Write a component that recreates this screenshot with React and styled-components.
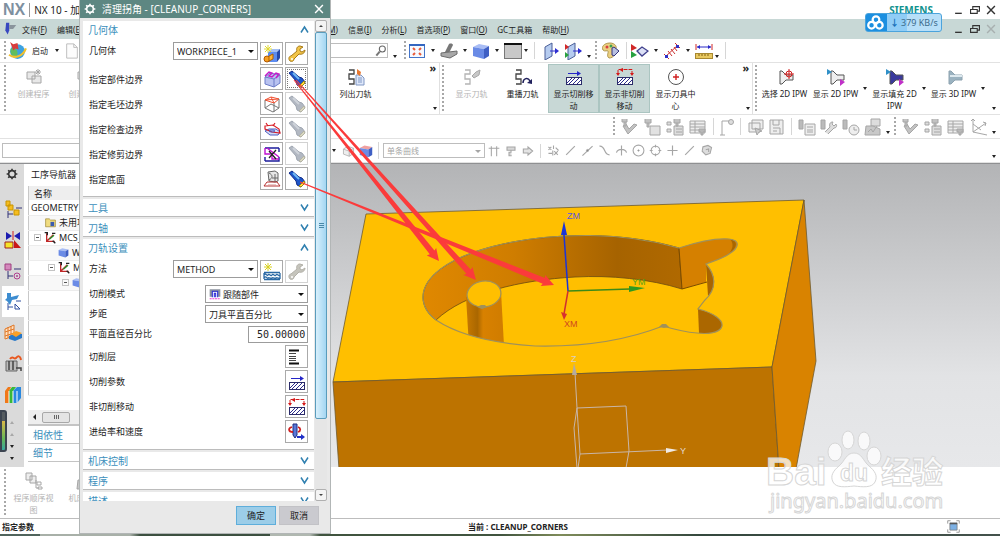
import React from 'react'
import styled, { createGlobalStyle, css } from 'styled-components'

const GlobalStyle = createGlobalStyle`
  * {
    box-sizing: border-box;
  }
  body {
    margin: 0;
    background: #ffffff;
  }
  body, button, input, select {
    font-family: 'Noto Sans', 'Noto Sans CJK SC', sans-serif;
    font-size: 9px;
    color: #222222;
  }
`

/* ---------- icons ---------- */

const Svg = styled.svg`
  display: block;
  flex: none;
  fill: none;
  stroke-width: 1;
`

const Icon = ({ size = 18, children }) => (
  <Svg width={size} height={size} viewBox="0 0 18 18" aria-hidden="true">
    {children}
  </Svg>
)

const Gear = ({ size, color }) => (
  <Icon size={size}>
    <circle cx="9" cy="9" r="5" stroke={color} strokeWidth="2.4" />
    <path
      d="M9 1v3M9 14v3M1 9h3M14 9h3M3.3 3.3l2.2 2.2M12.5 12.5l2.2 2.2M3.3 14.7l2.2-2.2M12.5 5.5l2.2-2.2"
      stroke={color}
      strokeWidth="2.4"
    />
  </Icon>
)

const Cube = ({ size, light = '#a9bdf5', mid = '#6a8be6', dark = '#3f5fc4' }) => (
  <Icon size={size}>
    <path d="M1 5l6-3 10 2-5 3z" fill={light} />
    <path d="M1 5l11 2v10L1 14z" fill={mid} />
    <path d="M12 7l5-3v10l-5 3z" fill={dark} />
  </Icon>
)

const NewBlock = () => (
  <Icon>
    <path d="M5 7l4-3h8l-3 3z" fill="#a4c0f4" />
    <path d="M5 7h9v10H5z" fill="#5c8cf0" />
    <path d="M14 7l3-3v9l-3 4z" fill="#2448a8" />
    <circle cx="4" cy="14" r="3" fill="#f8a020" stroke="#b05800" />
    <path d="M6 11l4-2v5l-4 2z" fill="#ffb838" stroke="#b06000" />
    <path d="M5 0v8M1 4h8M2 1l6 6M8 1L2 7" stroke="#e0d830" />
  </Icon>
)

const Wrench = ({ muted }) => (
  <Icon>
    <path
      d="M12 1c-3 0-4 3-3 5L3 11c-2 0-3 3-1 5 2 1 4 0 4-2l5-5c3 1 6-1 6-4l-3 2-2-1 0-2 3-2z"
      fill={muted ? '#c5c4bc' : '#f2c548'}
      stroke={muted ? '#b2b0a8' : '#a87a18'}
    />
    <circle cx="4" cy="14" r="1" fill="#ffffff" />
  </Icon>
)

const Torch = ({ muted }) => (
  <Icon>
    <path
      d="M1 3l3-2 7 6 3 1 3 4-4 5-4-2-1-4z"
      fill={muted ? '#b2b8c2' : '#1c55c8'}
      stroke={muted ? '#9fa6b1' : '#122c88'}
    />
    <path d="M5 3l6 6" stroke={muted ? '#ced3da' : '#6fb8f5'} strokeWidth="2" />
    <path d="M16 11l1 2-4 4-2-1z" fill={muted ? '#d8d7c0' : '#ffe040'} stroke={muted ? '#b4b3a4' : '#a08410'} />
  </Icon>
)

const PartBoundary = () => (
  <Icon>
    <path d="M2 7l5-4 10 2v8l-6 4-9-3z" fill="#b8c2f0" stroke="#6c7cc8" />
    <path d="M11 9v8M2 7l9 2 6-4" stroke="#6c7cc8" />
    <path d="M2 6l4-4 3 1-3 3 3 1 4-4 3 1-3 4" stroke="#c818c8" strokeWidth="1.4" />
  </Icon>
)

const BlankBoundary = () => (
  <Icon>
    <path d="M2 5l6-3 8 2-5 4zM2 5l14-1M8 2l3 6" stroke="#f05030" />
    <path d="M2 5v8l8 4 6-4V4M11 8v9M2 13l6-4 8 4" stroke="#777777" />
  </Icon>
)

const CheckBoundary = () => (
  <Icon>
    <path d="M2 11l5 4h8l2-3-4-3H6z" fill="#d4dcf6" stroke="#4c5cc0" />
    <path d="M2 6l8-1 6 4 1 4-8-1-7-3zM3 3l2 3M12 3l-2 3" stroke="#d81c24" strokeWidth="1.2" />
    <ellipse cx="9" cy="11" rx="3" ry="1" stroke="#4c5cc0" />
  </Icon>
)

const TrimBoundary = () => (
  <Icon>
    <path d="M2 3h14M16 3v4M2 16h14v-4M2 12v4" stroke="#1c1c9c" strokeWidth="1.4" />
    <path d="M2 3v6h7v5h7M4 3l12 9" stroke="#c010d0" strokeWidth="1.4" />
    <path d="M6 6l7 8M13 5l-7 8" stroke="#222222" strokeWidth="1.3" />
  </Icon>
)

const FloorFace = () => (
  <Icon>
    <path d="M5 2l7-1 3 2v8l-3 1-6-1z" fill="#e6e6e6" stroke="#666666" />
    <path d="M6 3c4 2 4 5 0 7M12 4v8M9 8h6" stroke="#666666" />
    <path d="M1 16l3-4h10l3 4z" fill="none" stroke="#b83030" />
    <path d="M5 15h8" stroke="#d89090" />
  </Icon>
)

const NewMethod = () => (
  <Icon>
    <path
      d="M1 9.5h16M1 16.5h16M1 10v6M17 10v6M1 12c2-3 3 2 4 0s3 2 4 0 3 2 4 0 3 2 4 0M1 15c2-3 3 1 4 0s3 1 4 0 3 1 4 0 3 1 4 0"
      stroke="#2b69a4"
      strokeWidth="1.3"
    />
    <path d="M5 0v8M1 4h8M2 1l6 6M8 1L2 7" stroke="#d8d020" />
  </Icon>
)

const FollowPart = () => (
  <Icon size={12}>
    <path d="M1 2h16v11h-4V6H5v7H1z" fill="#8c929e" />
    <path d="M5 14V5h8v9M8 14V8h2v6" stroke="#3030d8" strokeWidth="1.6" />
    <path d="M1 16h16" stroke="#f040d0" strokeWidth="1.6" strokeDasharray="3 1" />
  </Icon>
)

const CutLevels = () => (
  <Icon>
    <path d="M1 2.5h10M1 15.5h10" stroke="#111111" strokeWidth="1.8" />
    <path d="M1 5.5h7M1 8.5h7M1 10.5h7M1 12.5h7" stroke="#444444" />
  </Icon>
)

const Hatch = () => (
  <>
    <rect x="1.5" y="9.5" width="15" height="7" fill="#ffffff" stroke="#2c2c6a" />
    <path d="M2 15l5-5M4 16l6-6M8 16l6-6M12 16l4-4" stroke="#2c2c8a" />
  </>
)

const CutParams = () => (
  <Icon>
    <Hatch />
    <path d="M3 5.5h10" stroke="#2626c8" />
    <path d="M12 3l4 2.5-4 2.5z" fill="#2626c8" />
  </Icon>
)

const NonCutMoves = () => (
  <Icon>
    <Hatch />
    <path d="M2 6V1.5h14V6" stroke="#d41818" strokeDasharray="4 1" />
    <path d="M0 5h4l-2 3zM14 5h4l-2 3zM7 0v4L3 1.5z" fill="#d41818" />
  </Icon>
)

const Feeds = () => (
  <Icon>
    <path d="M5 1h4v11l-2 3-2-3z" fill="#5a78d8" stroke="#1c2c80" />
    <path d="M4 4c-4 1-4 5 1 5M10 4c3 1 3 4 0 5" stroke="#d02020" strokeWidth="1.8" />
    <path d="M9 14h5" stroke="#2030c8" strokeWidth="2" />
    <path d="M13 11l4 3-4 3z" fill="#2030c8" />
  </Icon>
)

const Launch = () => (
  <Icon size={19}>
    <circle cx="9" cy="10" r="7" fill="#3da2e0" />
    <path d="M3 7c4-2 8 3 5 8-4 0-7-4-5-8z" fill="#5fbe60" />
    <path d="M1 13c5 4 13 2 16-6" stroke="#f3c02c" strokeWidth="2" />
    <path d="M2 1l3 2 4-1 1 6-3-1-2 2z" fill="#d83c3c" />
  </Icon>
)

const BlankPage = () => (
  <Icon size={16}>
    <path d="M3 1h8l4 4v12H3z" fill="#fcfcfc" stroke="#b8b8b8" />
    <path d="M11 1v4h4" stroke="#b8b8b8" />
  </Icon>
)

const FitView = () => (
  <Icon>
    <rect x="1.5" y="2.5" width="15" height="13" fill="#f6f9ff" stroke="#4474c8" />
    <path d="M1 3h16" stroke="#3366c0" strokeWidth="2" />
    <path d="M5 6l2 2M13 6l-2 2M5 13l2-2M13 13l-2-2" stroke="#e85a38" strokeWidth="2" />
  </Icon>
)

const SectionView = () => (
  <Icon>
    <path d="M5 10L9 2c2-1 4 0 4 1l-4 8z" fill="#777777" />
    <path d="M1 11l8-1 8-1v3l-7 4-9-2z" fill="#a8a8a8" stroke="#6c6c6c" />
  </Icon>
)

const Backdrop = () => (
  <Icon>
    <rect x="0.5" y="1.5" width="17" height="15" fill="#c8c8c8" stroke="#777777" />
    <path d="M0 2h18" stroke="#111111" strokeWidth="2" />
  </Icon>
)

const PlaneOut = ({ flag }) => (
  <Icon>
    <path d="M3 5l7-4v13l-7 4z" fill="#b6ccf0" stroke="#4a5f98" />
    <path d="M8 9h6" stroke="#2c2cd0" />
    <path d="M13 6l4 3-4 3z" fill="#2c2cd0" />
    {flag && (
      <>
        <path d="M0 2l4 3-4 3z" fill="#d02828" />
        <path d="M0 10l4 3-4 3z" fill="#28a040" />
      </>
    )}
  </Icon>
)

const Palette = () => (
  <Icon>
    <path d="M8 1c-6 0-9 4-7 7 2 2 4 0 5 1s-2 5 1 7c5 0 6-4 6-8 3-3 0-7-5-7z" fill="#ecd080" stroke="#b09850" />
    <circle cx="5" cy="5" r="1.5" fill="#d84040" />
    <circle cx="9" cy="4" r="1.5" fill="#40a050" />
    <path d="M10 6l2-1 5 4-5 5-2-1z" fill="#b8c0e0" stroke="#34347c" />
  </Icon>
)

const PlayShape = () => (
  <Icon>
    <path d="M0 2l6 4-6 3z" fill="#d02828" />
    <path d="M0 9l6 4-6 3z" fill="#28a040" />
    <path d="M6 9l5-4 6 4-6 5z" fill="#dce0f6" stroke="#40408c" strokeWidth="1.3" />
  </Icon>
)

const Measure = () => (
  <Icon>
    <path d="M2 15L15 3M1 12l5 5M12 1l5 5M5 9l4 5M8 7l4 5M11 5l3 4" stroke="#cc3030" />
    <path d="M2 13h3v3H2zM13 3h3v3h-3z" fill="#3030c8" />
  </Icon>
)

const Ruler = () => (
  <Icon>
    <path d="M1 2v6M17 2v6" stroke="#d02828" />
    <path d="M2 5h14" stroke="#2828c8" />
    <path d="M2 5l3-2v4zM16 5l-3-2v4z" fill="#2828c8" />
    <rect x="0.5" y="11.5" width="17" height="5" fill="#e8c860" stroke="#a88830" />
    <path d="M4 12v2M7 12v2M10 12v2M13 12v2" stroke="#806010" />
  </Icon>
)

const pathLine = 'M2 2h5v4H2v5h5v5H2'

const PathIcon = ({ kind }) => {
  const muted = kind === 'show'
  return (
    <Icon>
      <path d={pathLine} stroke={muted ? '#b4b4b4' : '#444444'} strokeWidth="1.3" />
      {kind === 'list' && (
        <>
          <path d="M9 7h5l3 3v7H9z" fill="#dfe8fa" stroke="#8098c4" />
          <path d="M11 10h4M11 12h4M11 14h4" stroke="#8098c4" />
          <path d="M10 1l4 3-1 4-3-2z" fill="#e87830" />
        </>
      )}
      {kind === 'show' && <path d="M9 8l4-4 4-2-1 5-5 3z" fill="#c8c8c8" stroke="#a8a8a8" />}
      {kind === 'replay' && (
        <>
          <path d="M9 15c0-5 5-6 7-2" stroke="#20205c" strokeWidth="1.5" />
          <path d="M13 15l5-4v5z" fill="#20205c" />
        </>
      )}
    </Icon>
  )
}

const ToolCenter = () => (
  <Icon>
    <circle cx="9" cy="9" r="7.5" stroke="#555555" />
    <path d="M9 6v6M6 9h6" stroke="#d02020" strokeWidth="1.4" />
  </Icon>
)

const Ipw = ({ kind }) => (
  <Icon>
    <path
      d="M4 3h2l4 4h7v5h-7l-4 4H4z"
      fill={kind === 'fill' ? '#3a3a9c' : kind === '3d' ? '#9ab2c0' : '#eeeeee'}
      stroke={kind === '3d' ? '#8da2af' : '#555555'}
    />
    {kind === 'pick' && (
      <>
        <circle cx="13" cy="6" r="3" stroke="#d02020" />
        <path d="M13 1v10M8 6h10" stroke="#d02020" />
      </>
    )}
    {(kind === 'show' || kind === 'fill') && (
      <>
        <path d="M0 1l5 3-5 3z" fill="#3090c8" />
        <path d="M13 11l5 3-5 4z" fill="#c030c8" />
      </>
    )}
    {kind === '3d' && <path d="M5 8h12" stroke="#dce8ee" strokeWidth="2" />}
  </Icon>
)

const mutedShapes = {
  create: (
    <>
      <path d="M2 4h8v7H2zM7 8h9v7H7z" fill="#e8e8e8" />
      <path d="M13 1v6M10 4h6M11 2l4 4M15 2l-4 4" />
    </>
  ),
  check: (
    <>
      <path d="M3 8l5 8 9-9-3-1-5 5-3-5z" fill="#c2c2c2" />
      <path d="M2 1v3h5V1M4 4v4h2V4" fill="#c2c2c2" />
    </>
  ),
  block: (
    <>
      <path d="M2 1v4h6V1M4 5v4h2V5" fill="#c2c2c2" />
      <path d="M7 8h10v9H7z" fill="#e2e2e2" />
    </>
  ),
  tree: (
    <>
      <path d="M1 4h4v3H1zM1 11h4v3H1zM8 8h9v9H8z" fill="#dddddd" />
      <path d="M8 1v4h6V1M10 5v3h2V5M10 11h6M10 14h6" fill="#c2c2c2" />
    </>
  ),
  table: (
    <>
      <path d="M1 3h15v12H1z" fill="#eeeeee" />
      <path d="M1 6h15M1 9h15M1 12h15M6 3v12" />
      <path d="M10 11h6v3h-2v3h-2v-3h-2z" fill="#b8b8b8" />
    </>
  ),
  flag: (
    <>
      <path d="M4 17V3h9M2 17h5" />
      <circle cx="13" cy="4" r="2.5" fill="#dddddd" />
    </>
  ),
  layers: (
    <>
      <path d="M5 2h11v9H5zM2 5h11v9H2z" fill="#eeeeee" />
      <path d="M8 10l2 7 2-3 3-1z" fill="#cccccc" />
    </>
  ),
  save: (
    <>
      <path d="M2 2h13v14H2z" fill="#eeeeee" />
      <path d="M5 2v5h6V2M5 10h7v6M5 13h4" />
    </>
  ),
  sheet: (
    <>
      <path d="M1 2h4v9H1z" fill="#bbbbbb" />
      <path d="M7 6h10v11H7z" fill="#eeeeee" />
      <path d="M9 9h6M9 12h6M9 14h6" />
    </>
  ),
  tool: (
    <>
      <path d="M1 2h4v9H1z" fill="#bbbbbb" />
      <path d="M8 16l6-6c3 0 3-3 2-4l-2 2-2-2 1-2c-3 0-4 2-3 5l-5 5" fill="#dddddd" />
    </>
  ),
  clock: (
    <>
      <path d="M1 2h4v9H1z" fill="#bbbbbb" />
      <circle cx="12" cy="12" r="5" fill="#eeeeee" />
      <path d="M12 9v3h3" />
    </>
  ),
  machine: (
    <>
      <path d="M7 1h9v7H7z" fill="#dddddd" />
      <path d="M2 8h7l7 3v6H1z" fill="#c8c8c8" />
      <path d="M4 14l3-3 2 3 4-6" />
    </>
  ),
  axes: <path d="M3 1v13l14 3M3 14l13-9M3 6l8 6M1 3l2-2 2 2M13 4l3 1-1 3" />,
  sequence: (
    <>
      <path d="M1 1h6v7H1zM5 4h6v7H5z" fill="#eeeeee" />
      <path d="M11 8v8h3M12 10h4v3h-4zM13 15h4v2h-4z" />
    </>
  ),
  solid: <path d="M2 7l6-4 8 3v7l-6 4-8-3zM2 7l8 3 6-4M10 10v7" fill="#eeeeee" />,
  rails: <path d="M1 5h16M5 2v15M13 2v15" strokeWidth="1.6" />,
  roller: <path d="M3 3h12v5H3zM9 8v3H6v5h4" fill="#d8d8d8" strokeWidth="1.6" />,
  next: <path d="M2 6h7V3l7 6-7 6v-3H2z" fill="#e4e4e4" strokeWidth="1.6" />,
  points: <path d="M2 4l4 4M6 4L2 8M9 2v5M12 5l4 4M2 13h5M10 10l5 5M15 10l-5 5M8 9v7" strokeWidth="1.5" />,
  line: <path d="M3 15L15 3" strokeWidth="1.6" />,
  linePoint: (
    <>
      <path d="M2 16L16 3" strokeWidth="1.6" />
      <circle cx="9" cy="9" r="1.5" fill="#888888" />
    </>
  ),
  curve: <path d="M2 3c9-1 5 12 14 12" strokeWidth="1.6" />,
  cross: <path d="M9 2v14M2 12c2-6 12-6 14 0" strokeWidth="1.6" />,
  target: (
    <>
      <circle cx="9" cy="9" r="7.5" strokeWidth="1.5" />
      <circle cx="9" cy="9" r="1" fill="#888888" />
    </>
  ),
  circle: (
    <>
      <circle cx="9" cy="9" r="6" strokeWidth="1.5" />
      <path d="M9 1v4M9 13v4M1 9h4M13 9h4" strokeWidth="1.5" />
    </>
  ),
  plus: <path d="M9 2v14M2 9h14" strokeWidth="1.6" />,
  face: <path d="M4 4l7-2 5 3-2 8-6 2-5-5zM8 8l4-1v4" fill="#dddddd" strokeWidth="1.5" />
}

const Muted = ({ name, size }) => (
  <Icon size={size}>
    <g stroke="#a6a6a6">{mutedShapes[name]}</g>
  </Icon>
)

const railShapes = {
  assembly: (
    <>
      <path d="M2 1h4v5H2zM4 5h5v5H4zM10 10h5v5h-5z" fill="#f5bd20" stroke="#c89400" />
      <path d="M4 11v7M4 14h5M12 8h6" stroke="#333377" />
    </>
  ),
  constraint: (
    <>
      <path d="M2 1l6 4-6 4zM16 1l-6 4 6 4z" fill="#1c1cb0" />
      <path d="M9 0v9" stroke="#d02020" />
      <path d="M1 11h8v6H1z" fill="#f5e428" stroke="#a02020" />
      <path d="M10 9l7 8h-7z" fill="#c81818" />
    </>
  ),
  part: (
    <>
      <path d="M1 2h6v6H1z" fill="#d488bc" stroke="#a04080" />
      <path d="M4 9v8M4 14h5M10 7h7" stroke="#333377" />
      <circle cx="13" cy="14" r="3" stroke="#b04090" />
      <circle cx="13" cy="14" r="1" fill="#b04090" />
    </>
  ),
  operation: (
    <>
      <path d="M3 0h4v4l8-2-2 4-5 1-2 5-3-4-2-1 2-2z" fill="#3c8cd0" />
      <path d="M4 10v7M4 14h5M12 8h5M11 11l5 5h-5z" stroke="#3050a0" />
    </>
  ),
  machining: (
    <>
      <path d="M1 5l9-4v11l-9 3zM1 8l9-3M1 12l9-3M4 3v11M7 2v11" fill="#ffe0c0" stroke="#e07828" />
      <path d="M5 12l7-3 6 1v4l-7 3-6-2z" fill="#2878c8" />
      <path d="M7 10l5-3 6 2-6 4z" fill="#f8a028" />
    </>
  ),
  post: (
    <>
      <path d="M2 6h11v10H2z" fill="#bbbbbb" stroke="#666666" />
      <path d="M5 6v9M9 6v9M12 13h5v3" stroke="#444444" strokeWidth="1.5" />
      <path d="M6 4c3-4 4 1 6-1s4-3 5 2" stroke="#e85820" strokeWidth="2" />
    </>
  ),
  books: (
    <>
      <path d="M1 5l3-4h3L5 5v12H1z" fill="#f07818" />
      <path d="M5 5l3-4h4L9 5v12H5z" fill="#38b838" />
      <path d="M9 5l4-4h4v11l-4 5H9z" fill="#2888e0" />
      <path d="M5 5v12M9 5v12M13 5v12" stroke="#ffffff" />
    </>
  )
}

const Magnifier = () => (
  <Icon size={12}>
    <circle cx="11" cy="6" r="4.5" stroke="#666666" strokeWidth="1.6" />
    <path d="M7 10l-5 6" stroke="#777777" strokeWidth="3" />
  </Icon>
)

const Minimize = () => (
  <Icon size={10}>
    <path d="M2 15h12" stroke="#333333" strokeWidth="2.4" />
  </Icon>
)

const Restore = () => (
  <Icon size={10}>
    <path d="M5 7V3h12v8h-4M1 8h12v7H1z" stroke="#333333" strokeWidth="2" />
  </Icon>
)

const Cross = ({ color = '#333333' }) => (
  <Icon size={10}>
    <path d="M2 2l14 14M16 2L2 16" stroke={color} strokeWidth="2.6" />
  </Icon>
)

/* ---------- page shell ---------- */

const Page = styled.div`
  position: relative;
  display: flex;
  flex-direction: column;
  min-height: 100vh;
  overflow: hidden;
  background: #ffffff;
`

const bar = css`
  display: flex;
  align-items: center;
  flex: none;
  white-space: nowrap;
`

const TitleBar = styled.header`
  ${bar}
  height: 19px;
  padding: 0 4px 0 3px;
`

const Brand = styled.strong`
  padding-right: 4px;
  border-right: 1px solid #999999;
  color: #7e90a0;
  font-family: 'Liberation Sans', sans-serif;
  font-size: 16px;
  line-height: 14px;
`

const DocumentTitle = styled.span`
  padding-left: 4px;
  font-size: 10px;
`

const Siemens = styled.strong`
  margin-left: auto;
  margin-right: 21px;
  color: #12928f;
  font-family: 'Noto Sans', sans-serif;
  font-size: 10px;
`

const WindowButtons = styled.div`
  display: flex;
  gap: 6px;
  ${({ $end }) => $end && 'margin-left: auto;'}
`

const PlainButton = styled.button`
  display: flex;
  align-items: center;
  justify-content: center;
  flex: none;
  padding: 0;
  border: 0;
  background: none;
`

const MenuBar = styled.nav`
  ${bar}
  height: 20px;
  padding: 0 4px 0 3px;
  background: #c8d8d6;
`

const MenuItem = styled.button`
  padding: 0 5px;
  border: 0;
  background: none;
  font-size: 8px;
  white-space: nowrap;
`

const Dock = styled.div`
  ${bar}
  width: ${({ $wide }) => ($wide ? 340 : 328)}px;
  align-self: stretch;
  justify-content: ${({ $spread }) => ($spread ? 'space-between' : 'flex-start')};
`

const Cluster = styled.div`
  display: flex;
  align-items: center;
`

const Toolbar = styled.div`
  ${bar}
  height: ${({ $tall }) => ($tall ? 52 : 24)}px;
  padding-left: 2px;
  padding-right: 2px;
  border-bottom: 1px solid #e2e2e2;
  justify-content: ${({ $end }) => ($end ? 'flex-end' : 'flex-start')};
`

const Grip = styled.span`
  align-self: stretch;
  flex: none;
  width: 2px;
  margin: 2px 2px;
  background: repeating-linear-gradient(#a8a8a8 0 2px, transparent 2px 4px);
`

const Separator = styled.span`
  flex: none;
  align-self: stretch;
  width: 1px;
  margin: 3px 4px;
  background: #d6d6d6;
`

const ToolButton = styled(PlainButton)`
  width: ${({ $width }) => $width || 18}px;
  height: 20px;
`

const CaretButton = styled(PlainButton)`
  width: ${({ $narrow }) => ($narrow ? 8 : 14)}px;
  height: 20px;
  ${({ $low }) => $low && 'align-self: flex-end; height: 12px;'}

  &::after {
    content: '';
    border: 2px solid transparent;
    border-top: 3px solid ${({ $pale }) => ($pale ? '#a8a8a8' : '#222222')};
    border-bottom: 0;
    ${({ $up }) => $up && 'transform: rotate(180deg);'}
  }
`

const Caret = props => <CaretButton type="button" aria-label="更多" {...props} />

const SearchBox = styled.label`
  display: flex;
  align-items: center;
  width: 58px;
  height: 15px;
  border: 1px solid #bdbdbd;
`

const BareInput = styled.input`
  flex: 1;
  min-width: 0;
  padding: 0;
  border: 0;
  outline: 0;
`

const CommandButton = styled.button`
  display: flex;
  flex-direction: column;
  align-items: center;
  flex: none;
  gap: 2px;
  width: 51px;
  height: 49px;
  padding: ${({ $active }) => ($active ? 3 : 4)}px 2px 0;
  border: ${({ $active }) => ($active ? '1px solid #abc5c1' : '0')};
  background: ${({ $active }) => ($active ? '#c8d8d6' : 'none')};
  color: ${({ $muted }) => ($muted ? '#b4b4b4' : '#222222')};
  font-size: 8px;
  line-height: 12px;
  white-space: ${({ $nowrap }) => ($nowrap ? 'nowrap' : 'normal')};
`

const Overflow = styled.div`
  display: flex;
  flex-direction: column;
  align-items: center;
  justify-content: space-between;
  align-self: stretch;
  width: 12px;
  margin-left: auto;
  font-size: 11px;
  font-weight: 700;
  line-height: 10px;
`

const CommandGroup = styled.div`
  display: flex;
  align-items: center;
  align-self: stretch;
  flex: none;
  width: ${({ $width }) => $width}px;
  border-right: 1px solid #e0e0e0;
`

const PlainSelect = styled.select`
  appearance: none;
  width: 100%;
  height: 100%;
  padding: 0 12px 0 ${({ $icon }) => ($icon ? 17 : 3)}px;
  border: 1px solid ${({ $muted }) => ($muted ? '#bdbdbd' : '#9c9c9c')};
  border-radius: 0;
  background: #ffffff;
  color: ${({ $muted }) => ($muted ? '#a5a5a5' : '#222222')};
  font-size: ${({ $muted }) => ($muted ? 8 : 9)}px;
`

const SelectBox = styled.div`
  position: relative;
  flex: none;
  width: ${({ $width }) => $width}px;
  height: ${({ $low }) => ($low ? 15 : 18)}px;

  &::after {
    content: '';
    position: absolute;
    top: 50%;
    right: 4px;
    margin-top: -1px;
    border: 3px solid transparent;
    border-top-color: ${({ $low }) => ($low ? '#a5a5a5' : '#111111')};
    border-bottom: 0;
    pointer-events: none;
  }

  svg {
    position: absolute;
    top: 3px;
    left: 4px;
  }
`

/* ---------- work area ---------- */

const Work = styled.main`
  display: grid;
  grid-template-columns: 24px 307px 1fr;
  flex: 1;
  min-height: 303px;
  border-top: 1px solid #8f9092;
`

const Rail = styled.div`
  display: flex;
  flex-direction: column;
  align-items: center;
  background: #dadada;
`

const RailTab = styled.button`
  display: flex;
  align-items: center;
  justify-content: center;
  width: 22px;
  height: 31px;
  margin-left: 2px;
  padding: 0;
  border: 0;
  background: ${({ $active }) => ($active ? '#ffffff' : 'none')};
`

const RailGear = styled(PlainButton)`
  width: 22px;
  height: 19px;
  margin-bottom: 10px;
`

const RailFoot = styled.div`
  display: flex;
  align-items: flex-start;
  align-self: stretch;
  gap: 1px;
  flex: 1;
`

const Meter = styled.span`
  width: 7px;
  height: 42px;
  border: 2px solid #3c4450;
  border-radius: 0 3px 3px 0;
  background: linear-gradient(#555c60 0 25%, #d8b848 25%, #68b858 70%, #38a8a0);
`

const RailArrows = styled.div`
  display: flex;
  flex-direction: column;
  padding-top: 6px;
`

const Navigator = styled.section`
  display: flex;
  flex-direction: column;
  padding-left: 4px;
  background: #ffffff;
  overflow: hidden;
`

const NavTitle = styled.h2`
  margin: 0;
  padding-left: 3px;
  font-size: 9px;
  font-weight: 400;
  line-height: 22px;
`

const NavTable = styled.table`
  width: 100%;
  border-collapse: collapse;
  border-left: 1px solid #c8c8c8;

  th {
    height: 14px;
    padding: 0 5px;
    background: #eeeeee;
    font-weight: 400;
    line-height: 13px;
    text-align: left;
  }
  td {
    height: 15px;
    padding: 0 2px;
    line-height: 13px;
    border-bottom: 1px solid #ececec;
  }
  tr:nth-child(even) td {
    background: #f8f8f8;
  }
`

const TreeCell = styled.div`
  display: flex;
  align-items: center;
  gap: 3px;
  padding-left: ${({ $indent }) => $indent}px;
`

const Expander = styled.span`
  display: flex;
  align-items: center;
  justify-content: center;
  width: 7px;
  height: 7px;
  border: 1px solid #c4c4c4;

  &::after {
    content: '';
    width: 3px;
    height: 1px;
    background: #555555;
  }
`

const NavScroll = styled.div`
  display: flex;
  align-items: center;
  gap: 3px;
  margin-top: auto;
  height: 14px;
  padding-left: 5px;
  background: #eeeeee;
`

const NavArrow = styled.span`
  border: 3px solid transparent;
  border-right-color: #222222;
  border-left: 0;
`

const NavThumb = styled.span`
  display: flex;
  align-items: center;
  justify-content: center;
  width: 28px;
  height: 11px;
  margin-left: 3px;
  border: 1px solid #a8a8a8;
  border-radius: 2px;
  background: #e4e4e4;

  &::after {
    content: '';
    width: 5px;
    height: 4px;
    background: repeating-linear-gradient(90deg, #666666 0 1px, transparent 1px 2px);
  }
`

const NavFold = styled.button`
  height: 18px;
  padding: 0 5px;
  border: 0;
  border-bottom: 1px solid #c4c4c4;
  background: #ffffff;
  color: #3c8fbc;
  font-size: 10px;
  line-height: 14px;
  text-align: left;
`

const NavFoot = styled.div`
  display: flex;
  flex-direction: column;
  padding-bottom: 5px;
  border-top: 2px solid #c4c4c4;
`

const Scene = styled.svg`
  display: block;
  width: 100%;
  height: 100%;
  min-width: 0;
  font-family: 'Liberation Sans', sans-serif;
  font-size: 9px;
`

const BottomBar = styled.div`
  ${bar}
  height: 51px;
  padding-left: 2px;
`

const StatusBar = styled.footer`
  ${bar}
  height: 16px;
  padding: 0 40px 0 2px;
  border-top: 1px solid #bdbdbd;
  font-size: 8px;
  font-weight: 700;
`

const StatusCell = styled.span`
  width: 466px;
`

const StatusIcon = styled.span`
  margin-left: auto;
`

const Taskbar = styled.div`
  flex: none;
  height: 3px;
  background: linear-gradient(90deg, #50645c 0 4%, #a8b0a8 4% 13%, #3c5040 14% 27%, #b0b8b0 27% 31%, #40543f 32% 50%, #7f8c5a 56%, #34483e 70%, #44524c);
`

/* ---------- dialog ---------- */

const Dialog = styled.form`
  position: absolute;
  top: 0;
  bottom: 3px;
  left: 79px;
  display: flex;
  flex-direction: column;
  width: 252px;
  border: 1px solid #b2b6b6;
  border-top: 0;
  background: #e9e9e9;
`

const DialogTitle = styled.header`
  ${bar}
  gap: 6px;
  height: 18px;
  padding: 0 6px 0 4px;
  background: #5d8782;
  color: #ffffff;
`

const DialogName = styled.h1`
  flex: 1;
  margin: 0;
  font-size: 10px;
  font-weight: 400;
  line-height: 14px;
`

const DialogBody = styled.div`
  display: flex;
  flex: 1;
  min-height: 0;
  margin-top: 2px;
  padding: 0 3px;
`

const Sections = styled.div`
  flex: 1 1 0;
  height: 100%;
  padding-top: 1px;
  overflow: hidden;
`

const SectionBox = styled.section`
  margin-bottom: 2px;
  border-bottom: 1px solid #bcbcbc;
  background: #ffffff;
`

const SectionHead = styled.button`
  display: flex;
  align-items: center;
  justify-content: space-between;
  width: 100%;
  height: 17px;
  padding: 0 5px;
  border: 0;
  background: none;
  color: #3c8fbc;
  font-size: 10px;
  line-height: 14px;
`

const SectionBody = styled.div`
  display: flex;
  flex-direction: column;
  gap: 2px;
  padding: 4px 6px 6px;
`

const FieldRow = styled.div`
  display: flex;
  align-items: ${({ $top }) => ($top ? 'flex-start' : 'center')};
  gap: 2px;
`

const FieldLabel = styled.label`
  flex: 1;
  padding-top: ${({ $lower }) => ($lower ? 3 : 0)}px;
  line-height: 18px;
`

const SquareButton = styled.button`
  display: flex;
  align-items: center;
  justify-content: center;
  flex: none;
  width: 23px;
  height: 23px;
  padding: 0;
  border: 1px solid ${({ disabled }) => (disabled ? '#d2d2d2' : '#aaaaaa')};
  background: #ffffff;
  ${({ $focused }) => $focused && 'outline: 1px dotted #777777; outline-offset: -3px;'}
`

const NumberInput = styled.input`
  width: 60px;
  height: 17px;
  padding: 0 1px 0 8px;
  border: 1px solid #9c9c9c;
  font-family: 'DejaVu Sans Mono', monospace;
  font-size: 10px;
`

const ScrollTrack = styled.div`
  display: flex;
  flex-direction: column;
  flex: none;
  width: 12px;
  margin-left: 1px;
  background: #e6e6e6;
`

const ScrollArrow = styled(PlainButton)`
  height: 12px;
  border: 1px solid #b0b0b0;
  border-radius: 2px;
  background: #f4f4f4;

  &::after {
    content: '';
    border: 2px solid transparent;
    border-${({ $up }) => ($up ? 'bottom' : 'top')}-color: #444444;
    border-${({ $up }) => ($up ? 'top' : 'bottom')}: 0;
  }
`

const ScrollThumb = styled.div`
  display: flex;
  align-items: center;
  justify-content: center;
  flex: 388;
  border: 1px solid #5a9cbc;
  border-radius: 2px;
  background: linear-gradient(90deg, #d8f0fc, #a4d6f2);

  &::after {
    content: '';
    width: 5px;
    height: 6px;
    background: repeating-linear-gradient(#4888a8 0 1px, transparent 1px 2px);
  }
`

const ScrollRest = styled.div`
  flex: 70;
`

const DialogFooter = styled.footer`
  display: flex;
  justify-content: flex-end;
  align-items: flex-start;
  gap: 3px;
  height: 32px;
  padding: 5px 11px 0 0;
`

const FooterButton = styled.button`
  width: 40px;
  height: 19px;
  padding: 0;
  border: 1px solid ${({ $primary }) => ($primary ? '#5eaedb' : '#c2c2c6')};
  background: ${({ $primary }) => ($primary ? '#9ccde8' : '#cacacf')};
`

const Chevron = ({ open }) => (
  <Icon size={9}>
    <path d={open ? 'M2 15L9 4l7 11' : 'M2 3l7 11 7-11'} stroke="#3080b0" strokeWidth="3" />
  </Icon>
)

const Section = ({ title, open, children }) => (
  <SectionBox>
    <SectionHead type="button" aria-expanded={Boolean(open)}>
      {title}
      <Chevron open={open} />
    </SectionHead>
    {open && <SectionBody>{children}</SectionBody>}
  </SectionBox>
)

const Picker = ({ id, value, width, icon }) => (
  <SelectBox $width={width}>
    <PlainSelect id={id} $icon={Boolean(icon)} defaultValue={value}>
      <option>{value}</option>
    </PlainSelect>
    {icon}
  </SelectBox>
)

const boundaries = [
  { id: 'part', label: '指定部件边界', icon: <PartBoundary />, set: true, focused: true },
  { id: 'blank', label: '指定毛坯边界', icon: <BlankBoundary /> },
  { id: 'check', label: '指定检查边界', icon: <CheckBoundary /> },
  { id: 'trim', label: '指定修剪边界', icon: <TrimBoundary /> },
  { id: 'floor', label: '指定底面', icon: <FloorFace />, set: true }
]

const pathActions = [
  { id: 'levels', label: '切削层', icon: <CutLevels /> },
  { id: 'params', label: '切削参数', icon: <CutParams /> },
  { id: 'moves', label: '非切削移动', icon: <NonCutMoves /> },
  { id: 'feeds', label: '进给率和速度', icon: <Feeds /> }
]

const CleanupDialog = () => (
  <Dialog onSubmit={e => e.preventDefault()}>
    <DialogTitle>
      <Gear size={12} color="#ffffff" />
      <DialogName>清理拐角 - [CLEANUP_CORNERS]</DialogName>
      <PlainButton type="button" aria-label="关闭">
        <Cross color="#ffffff" />
      </PlainButton>
    </DialogTitle>
    <DialogBody>
      <Sections>
        <Section title="几何体" open>
          <FieldRow $top>
            <FieldLabel htmlFor="geometry">几何体</FieldLabel>
            <Picker id="geometry" value="WORKPIECE_1" width={85} />
            <SquareButton type="button" aria-label="新建几何体">
              <NewBlock />
            </SquareButton>
            <SquareButton type="button" aria-label="编辑几何体">
              <Wrench />
            </SquareButton>
          </FieldRow>
          {boundaries.map(({ id, label, icon, set, focused }) => (
            <FieldRow key={id}>
              <FieldLabel htmlFor={id} $lower>
                {label}
              </FieldLabel>
              <SquareButton id={id} type="button">
                {icon}
              </SquareButton>
              <SquareButton type="button" aria-label="显示" disabled={!set} $focused={focused}>
                <Torch muted={!set} />
              </SquareButton>
            </FieldRow>
          ))}
        </Section>
        <Section title="工具" />
        <Section title="刀轴" />
        <Section title="刀轨设置" open>
          <FieldRow $top>
            <FieldLabel htmlFor="method">方法</FieldLabel>
            <Picker id="method" value="METHOD" width={85} />
            <SquareButton type="button" aria-label="新建方法">
              <NewMethod />
            </SquareButton>
            <SquareButton type="button" aria-label="编辑方法" disabled>
              <Wrench muted />
            </SquareButton>
          </FieldRow>
          <FieldRow>
            <FieldLabel htmlFor="pattern">切削模式</FieldLabel>
            <Picker id="pattern" value="跟随部件" width={103} icon={<FollowPart />} />
          </FieldRow>
          <FieldRow>
            <FieldLabel htmlFor="stepover">步距</FieldLabel>
            <Picker id="stepover" value="刀具平直百分比" width={103} />
          </FieldRow>
          <FieldRow>
            <FieldLabel htmlFor="percent">平面直径百分比</FieldLabel>
            <NumberInput id="percent" defaultValue="50.00000" />
          </FieldRow>
          {pathActions.map(({ id, label, icon }) => (
            <FieldRow key={id}>
              <FieldLabel htmlFor={id}>{label}</FieldLabel>
              <SquareButton id={id} type="button">
                {icon}
              </SquareButton>
            </FieldRow>
          ))}
        </Section>
        <Section title="机床控制" />
        <Section title="程序" />
        <Section title="描述" />
      </Sections>
      <ScrollTrack>
        <ScrollArrow type="button" aria-label="向上" $up />
        <ScrollThumb />
        <ScrollRest />
        <ScrollArrow type="button" aria-label="向下" />
      </ScrollTrack>
    </DialogBody>
    <DialogFooter>
      <FooterButton $primary>确定</FooterButton>
      <FooterButton type="button">取消</FooterButton>
    </DialogFooter>
  </Dialog>
)

/* ---------- model view ---------- */

const pocket =
  'M436 319C421 308 419 292 430 278C453 250 520 234 590 234.5C625 235 655 240 679 247C697 241 716 237 729 238C741 239 739 247 729 253C722 258 713 260 706 263C716 274 717 288 705 299L698 308C714 312 723 319 722 325C720 333 705 333 697 332C684 331 673 328 663 325C622 341 580 346 535 345C490 342 457 333 436 319Z'

const ModelView = () => (
  <Scene viewBox="331 163 669 303" preserveAspectRatio="xMinYMin slice" role="img" aria-label="零件">
    <defs>
      <linearGradient id="sky" x1="0" y1="0" x2="0" y2="1">
        <stop offset="0" stopColor="#b3b4b6" />
        <stop offset="0.7" stopColor="#e2e3e5" />
        <stop offset="1" stopColor="#e7e8ea" />
      </linearGradient>
      <linearGradient id="wall">
        <stop offset="0" stopColor="#e08800" />
        <stop offset="0.35" stopColor="#cf7d00" />
        <stop offset="0.75" stopColor="#a66300" />
        <stop offset="1" stopColor="#b06900" />
      </linearGradient>
      <linearGradient id="boss">
        <stop offset="0" stopColor="#c87900" />
        <stop offset="0.3" stopColor="#aa6700" />
        <stop offset="0.45" stopColor="#d88100" />
        <stop offset="1" stopColor="#d07c00" />
      </linearGradient>
      <clipPath id="pocketClip">
        <path d={pocket} />
      </clipPath>
    </defs>
    <rect x="331" y="163" width="669" height="303" fill="url(#sky)" />
    <g stroke="#6d5a30" strokeWidth="0.8">
      <path d="M366 213L804 199L772 366L333 381Z" fill="#ffbf00" />
      <path d="M333 381L772 366L779 468H339Z" fill="#bd7300" />
      <path d="M804 199L816 360L796 468H779L772 366Z" fill="#d98300" />
    </g>
    <path
      d="M436 319C421 308 419 292 430 278C453 250 520 234 590 234.5C625 235 655 240 679 247L682 288C650 278 610 274 575 276C520 279 465 292 436 319Z"
      fill="url(#wall)"
      stroke="#6b4a10"
      strokeWidth="0.8"
    />
    <path d="M679 247C697 241 716 237 729 238C741 239 739 247 729 253C722 258 713 260 706 263V281L682 288Z" fill="#d58000" />
    <path d="M679 247L682 288L707 281" fill="none" stroke="#7b4b00" />
    <path d="M730 238c9 2 7 9-1 15c4-6 5-10 1-15z" fill="#a86600" />
    <path d="M706 263C716 274 717 286 708 295Z" fill="#a86400" />
    <path d="M698 308C714 312 723 319 722 325C720 333 705 333 699 332Z" fill="#ab6700" />
    <g clipPath="url(#pocketClip)">
      <path d="M466 296L469 345H504L501 290Z" fill="url(#boss)" />
    </g>
    <ellipse cx="484" cy="293" rx="17" ry="13" fill="#ffbf00" stroke="#a0915a" strokeWidth="1.2" transform="rotate(-8 484 293)" />
    <path d="M477 306l4-2h4l2 2-5 2z" fill="#a0915a" />
    <path d={pocket} fill="none" stroke="#a0915a" strokeWidth="1.2" />
    <path d="M659 326l3-3h4l3 3-5 1z" fill="#a0915a" />

    <path d="M568 290L564 234" stroke="#1c34d8" strokeWidth="1.5" />
    <path d="M564 220L567 234H561Z" fill="#1c34d8" />
    <path d="M568 290L630 288" stroke="#3c8a18" strokeWidth="1.5" />
    <path d="M629 285L645 287L629 291Z" fill="#2e9a20" />
    <path d="M568 290L564 313" stroke="#d03030" strokeWidth="1.5" />
    <path d="M561 311L567 313L564 319Z" fill="#d83030" />
    <text x="567" y="218" fill="#5c58d8">ZM</text>
    <text x="632" y="284" fill="#5ca018">YM</text>
    <text x="564" y="326" fill="#d04820">XM</text>

    <g fill="none" stroke="#c9b6a8">
      <path d="M575 372L577 407L580 453L668 449" />
      <path d="M577 407L626 405L629 450L626 467M577 407L574 427L577 467M580 453L578 467" />
    </g>
    <path d="M574 362L577 374H572Z" fill="#b4aaa0" />
    <path d="M666 447L678 449L666 452Z" fill="#f0eae4" />
    <text x="571" y="361" fill="#d8d0c0">Z</text>
    <text x="680" y="453" fill="#e4d8cc">Y</text>
  </Scene>
)

/* ---------- overlays ---------- */

const ArrowLayer = styled.svg`
  position: absolute;
  top: 0;
  left: 0;
  pointer-events: none;
`

// Tapered pointer: thin tail that widens toward the head
const Pointer = ({ from, to }) => {
  const dx = to[0] - from[0]
  const dy = to[1] - from[1]
  const length = Math.hypot(dx, dy)
  const angle = (Math.atan2(dy, dx) * 180) / Math.PI
  const neck = length - 11
  return (
    <polygon
      fill="#fb3b3b"
      transform={`translate(${from[0]} ${from[1]}) rotate(${angle})`}
      points={`0,-0.5 ${neck},-3 ${neck - 1},-6 ${length},0 ${neck - 1},6 ${neck},3 0,0.5`}
    />
  )
}

const SpeedBadge = styled.div`
  position: absolute;
  top: 13px;
  right: 58px;
  display: flex;
  align-items: center;
  width: 77px;
  height: 19px;
  border: 1px solid #4ba3dc;
  border-radius: 3px;
  background: linear-gradient(90deg, #1c8fe0 0 28%, #90cdf6 28% 55%, #b8dff8 55%);
  color: #3c6c8c;
  font-size: 9px;
  white-space: nowrap;

  b {
    padding: 0 2px 0 4px;
    color: #1670b8;
  }
`

const Watermark = styled.svg`
  position: absolute;
  right: 50px;
  bottom: 18px;
  pointer-events: none;
  fill: rgba(255, 255, 255, 0.75);
  stroke: #d6d6d6;
  stroke-width: 1;
`

const WatermarkText = styled.text`
  font-family: ${({ $cjk }) => ($cjk ? "'Noto Sans CJK SC', sans-serif" : "'Liberation Sans', sans-serif")};
  font-size: ${({ $size }) => $size}px;
  font-weight: 700;
`

const WatermarkUrl = styled.text`
  font-family: 'Noto Sans', sans-serif;
  font-size: 20px;
`

const menus = [
  ['信息', 'I'],
  ['分析', 'L'],
  ['首选项', 'P'],
  ['窗口', 'O'],
  ['GC工具箱'],
  ['帮助', 'H']
]

const Menu = ({ label, hotkey }) => (
  <MenuItem type="button">
    {label}
    {hotkey && (
      <>
        (<u>{hotkey}</u>)
      </>
    )}
  </MenuItem>
)

const Tool = ({ label, width, children }) => (
  <ToolButton type="button" aria-label={label} $width={width}>
    {children}
  </ToolButton>
)

const MutedTools = ({ names, width = 23, size = 18 }) =>
  names.map((name, i) => (
    <Tool key={i} label={name} width={width}>
      <Muted name={name} size={size} />
    </Tool>
  ))

const Command = ({ label, icon, ...rest }) => (
  <CommandButton type="button" {...rest}>
    {icon}
    {label}
  </CommandButton>
)

const railTabs = ['assembly', 'constraint', 'part', 'operation', 'machining', 'post', 'books']

const snapTools = ['points', 'line', 'linePoint', 'curve', 'cross', 'target', 'circle', 'plus', 'line', 'face']

const treeRows = [
  { indent: 0, label: 'GEOMETRY' },
  { indent: 14, label: '未用项', icon: 'folder' },
  { indent: 3, label: 'MCS_', icon: 'mcs', open: true },
  { indent: 27, label: 'W', icon: 'cube' },
  { indent: 17, label: 'M', icon: 'mcs', open: true },
  { indent: 31, label: '', icon: 'cube', open: true },
  ...Array(7).fill({ indent: 0, label: '' })
]

const TreeIcon = ({ name }) => {
  if (name === 'cube') return <Cube size={11} />
  if (name === 'folder') {
    return (
      <Icon size={11}>
        <path d="M1 3h6l2 2h8v11H1z" fill="#f0dc80" stroke="#907820" />
        <path d="M9 8h6v7H9z" fill="#3c5cb0" />
      </Icon>
    )
  }
  return (
    <Icon size={12}>
      <path d="M4 2v12h12M4 14L14 4" stroke="#c02828" strokeWidth="2" />
      <path d="M8 11l7-6" stroke="#28902c" strokeWidth="2" />
      <path d="M1 1h4v4M12 2h5M13 13l4 4" stroke="#222222" strokeWidth="2" />
    </Icon>
  )
}

const App = () => (
  <Page>
    <GlobalStyle />
    <TitleBar>
      <Brand>NX</Brand>
      <DocumentTitle>NX 10 - 加</DocumentTitle>
      <Siemens>SIEMENS</Siemens>
      <WindowButtons>
        <PlainButton aria-label="最小化"><Minimize /></PlainButton>
        <PlainButton aria-label="还原"><Restore /></PlainButton>
        <PlainButton aria-label="关闭"><Cross /></PlainButton>
      </WindowButtons>
    </TitleBar>

    <MenuBar>
      <Dock $wide $spread>
        <Cluster>
          <Icon size={14}>
            <path d="M4 1h4v10l-2 5-3-5z" fill="#3848c0" />
            <path d="M8 4h9l-4 5H8z" fill="#8a949c" />
          </Icon>
          <Menu label="文件" hotkey="F" />
          <Menu label="编辑" hotkey="E" />
        </Cluster>
        <Menu hotkey="M" />
      </Dock>
      {menus.map(([label, hotkey]) => (
        <Menu key={label} label={label} hotkey={hotkey} />
      ))}
      <WindowButtons $end>
        <PlainButton aria-label="最小化文档"><Minimize /></PlainButton>
        <PlainButton aria-label="还原文档"><Restore /></PlainButton>
        <PlainButton aria-label="关闭文档"><Cross color="#a8b0b0" /></PlainButton>
      </WindowButtons>
    </MenuBar>

    <Toolbar>
      <Dock>
        <Grip />
        <Launch />
        <MenuItem type="button">启动</MenuItem>
        <Caret $narrow />
        <Tool label="新建" width={22}><BlankPage /></Tool>
      </Dock>
      <SearchBox>
        <BareInput aria-label="查找命令" />
        <Magnifier />
      </SearchBox>
      <Caret $low />
      <Grip />
      <Tool label="适合窗口"><FitView /></Tool>
      <Caret />
      <Tool label="剖切"><SectionView /></Tool>
      <Caret />
      <Tool label="着色"><Cube /></Tool>
      <Caret />
      <Tool label="背景"><Backdrop /></Tool>
      <Caret $narrow />
      <Separator />
      <Tool label="显示平面" width={23}><PlaneOut /></Tool>
      <Tool label="移动平面" width={23}><PlaneOut flag /></Tool>
      <Caret $low $narrow />
      <Grip />
      <Tool label="对象显示" width={23}><Palette /></Tool>
      <Separator />
      <Tool label="播放"><PlayShape /></Tool>
      <Caret />
      <Tool label="测量"><Measure /></Tool>
      <Caret />
      <Tool label="距离"><Ruler /></Tool>
      <Caret $low $narrow />
      <Separator />
    </Toolbar>

    <Toolbar $tall>
      <Dock>
        <Grip />
        <Command label="创建程序" icon={<Muted name="create" />} $muted />
        <Command label="创建刀具" icon={<Muted name="create" />} $muted />
      </Dock>
      <CommandGroup $width={110}>
        <Command label="列出刀轨" icon={<PathIcon kind="list" />} />
        <Overflow>
          »<Caret $narrow $low />
        </Overflow>
      </CommandGroup>
      <CommandGroup $width={313}>
        <Grip />
        <Command label="显示刀轨" icon={<PathIcon kind="show" />} $muted />
        <Command label="重播刀轨" icon={<PathIcon kind="replay" />} />
        <Command label="显示切削移动" icon={<CutParams />} $active />
        <Command label="显示非切削移动" icon={<NonCutMoves />} $active />
        <Command label="显示刀具中心" icon={<ToolCenter />} />
        <Overflow>
          »<Caret $narrow $low />
        </Overflow>
      </CommandGroup>
      <Grip />
      <Command label="选择 2D IPW" icon={<Ipw kind="pick" />} $nowrap />
      <Command label="显示 2D IPW" icon={<Ipw kind="show" />} $nowrap />
      <Caret $narrow />
      <Command label="显示填充 2D IPW" icon={<Ipw kind="fill" />} />
      <Caret $narrow />
      <Command label="显示 3D IPW" icon={<Ipw kind="3d" />} $nowrap />
      <Caret $narrow />
      <Overflow>
        <span />
        <Caret $narrow $low />
      </Overflow>
    </Toolbar>

    <Toolbar $end>
      <Grip />
      <MutedTools names={['check', 'block', 'tree', 'table']} />
      <Separator />
      <MutedTools names={['flag']} width={18} />
      <Separator />
      <MutedTools names={['layers', 'save']} width={21} />
      <Separator />
      <MutedTools names={['sheet', 'tool', 'clock', 'machine']} width={22} />
      <Caret $low $narrow />
      <Grip />
      <MutedTools names={['check', 'tree', 'table', 'axes']} />
      <Caret $low $narrow />
    </Toolbar>

    <Toolbar>
      <Dock>
        <SelectBox $width={300} $low>
          <PlainSelect aria-label="选择类型" $muted />
        </SelectBox>
      </Dock>
      <Caret $narrow />
      <MutedTools names={['solid']} width={20} size={13} />
      <Tool label="实体" width={16}><Cube size={14} light="#f0a0a0" /></Tool>
      <Separator />
      <SelectBox $width={102} $low>
        <PlainSelect aria-label="曲线规则" $muted defaultValue="单条曲线">
          <option>单条曲线</option>
        </PlainSelect>
      </SelectBox>
      <Cluster>
        <MutedTools names={['rails', 'roller', 'next']} width={17} size={12} />
        <Separator />
        <MutedTools names={snapTools} width={17} size={13} />
      </Cluster>
      <Overflow>
        <span />
        <Caret $narrow $low />
      </Overflow>
    </Toolbar>

    <Work>
      <Rail>
        <RailGear aria-label="设置"><Gear size={12} color="#333333" /></RailGear>
        {railTabs.map(name => (
          <RailTab key={name} type="button" aria-label={name} $active={name === 'operation'}>
            <Icon>{railShapes[name]}</Icon>
          </RailTab>
        ))}
        <RailFoot>
          <Meter />
          <RailArrows>
            <Caret $narrow $low $up $pale />
            <Caret $narrow $low $up $pale />
            <Caret $narrow $low />
            <Caret $narrow $low />
          </RailArrows>
        </RailFoot>
      </Rail>
      <Navigator>
        <NavTitle>工序导航器</NavTitle>
        <NavTable>
          <thead>
            <tr>
              <th>名称</th>
            </tr>
          </thead>
          <tbody>
            {treeRows.map(({ indent, label, icon, open }, i) => (
              <tr key={i}>
                <td>
                  <TreeCell $indent={indent}>
                    {open && <Expander />}
                    {icon && <TreeIcon name={icon} />}
                    {label}
                  </TreeCell>
                </td>
              </tr>
            ))}
          </tbody>
        </NavTable>
        <NavScroll>
          <NavArrow />
          <NavThumb />
        </NavScroll>
        <NavFoot>
          <NavFold type="button">相依性</NavFold>
          <NavFold type="button">细节</NavFold>
        </NavFoot>
      </Navigator>
      <ModelView />
    </Work>

    <BottomBar>
      <Grip />
      <Command label="程序顺序视图" icon={<Muted name="sequence" />} $muted />
      <Command label="机床视图" icon={<Muted name="machine" />} $muted />
    </BottomBar>
    <StatusBar>
      <StatusCell>指定参数</StatusCell>
      当前 : CLEANUP_CORNERS
      <StatusIcon>
        <Icon size={13}>
          <path d="M1 5V1h4M13 1h4v4M17 13v4h-4M5 17H1v-4" stroke="#777777" />
          <path d="M4 4h10v10H4z" fill="#7cb0e4" stroke="#777777" />
          <path d="M4 5h10" stroke="#555555" strokeWidth="2" />
        </Icon>
      </StatusIcon>
    </StatusBar>
    <Taskbar />

    <Watermark width="184" height="90" viewBox="0 0 184 90">
      <WatermarkText x="0" y="56" $size={39}>Bai</WatermarkText>
      <ellipse cx="69" cy="23" rx="7" ry="9" />
      <ellipse cx="82" cy="11" rx="6" ry="9" />
      <ellipse cx="98" cy="12" rx="6" ry="9" />
      <ellipse cx="108" cy="27" rx="7" ry="9" />
      <path d="M88 24c-8 0-9 8-15 13s-9 10-6 16 12 5 21 4c9 1 18 2 21-4s0-11-6-16-7-13-15-13z" />
      <WatermarkText x="74" y="52" $size={23}>du</WatermarkText>
      <WatermarkText x="115" y="54" $size={31} $cjk>经验</WatermarkText>
      <WatermarkUrl x="4" y="79">jingyan.baidu.com</WatermarkUrl>
    </Watermark>

    <CleanupDialog />

    <ArrowLayer width="560" height="300" aria-hidden="true">
      <Pointer from={[294, 80]} to={[439, 261]} />
      <Pointer from={[296, 80]} to={[476, 280]} />
      <Pointer from={[300, 182]} to={[554, 285]} />
    </ArrowLayer>

    <SpeedBadge>
      <Icon size={20}>
        <g stroke="#ffffff" strokeWidth="2">
          <circle cx="5" cy="11" r="3" />
          <circle cx="12" cy="11" r="3" />
          <circle cx="9" cy="6" r="3" />
        </g>
      </Icon>
      <b>↓</b>379 KB/s
    </SpeedBadge>
  </Page>
)

export default App
